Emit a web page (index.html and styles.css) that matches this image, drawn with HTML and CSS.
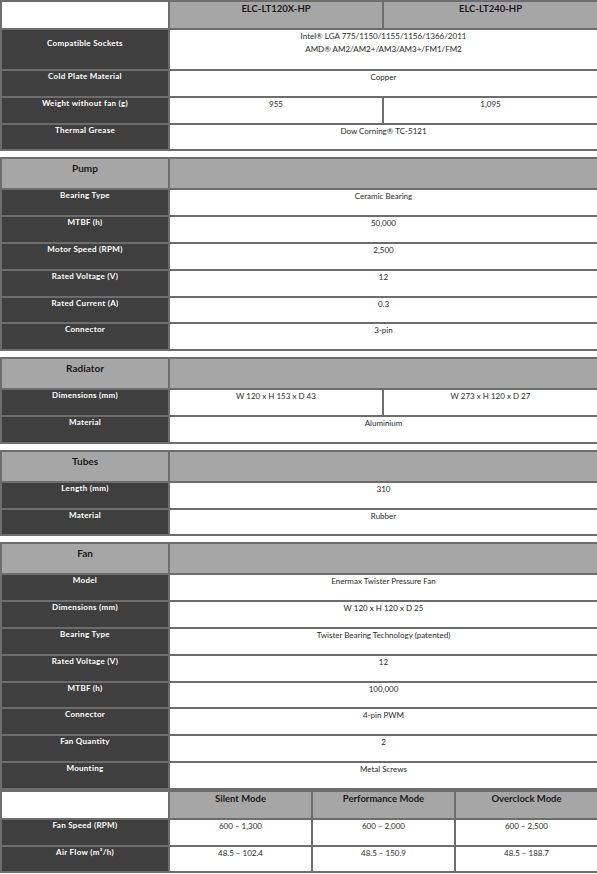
FILE: index.html
```html
<!DOCTYPE html>
<html>
<head>
<meta charset="utf-8">
<link rel="stylesheet" href="styles.css">
</head>
<body>
<div class="page">
  <table class="spec">
    <colgroup><col class="c1"><col class="c2"><col class="c3"></colgroup>
    <tr class="hrow"><td class="blank"></td><th class="model">ELC-LT120X-HP</th><th class="model">ELC-LT240-HP</th></tr>
    <tr class="tall"><td class="lab lab-tall">Compatible Sockets</td><td class="val" colspan="2">Intel® LGA 775/1150/1155/1156/1366/2011<br>AMD® AM2/AM2+/AM3/AM3+/FM1/FM2</td></tr>
    <tr class="row"><td class="lab">Cold Plate Material</td><td class="val" colspan="2">Copper</td></tr>
    <tr class="row"><td class="lab">Weight without fan (g)</td><td class="val">955</td><td class="val">1,095</td></tr>
    <tr class="row"><td class="lab">Thermal Grease</td><td class="val" colspan="2">Dow Corning® TC-5121</td></tr>
  </table>

  <table class="spec">
    <colgroup><col class="c1"><col class="c2"><col class="c3"></colgroup>
    <tr class="srow"><th class="sec">Pump</th><th class="gray" colspan="2"></th></tr>
    <tr class="row"><td class="lab">Bearing Type</td><td class="val" colspan="2">Ceramic Bearing</td></tr>
    <tr class="row"><td class="lab">MTBF (h)</td><td class="val" colspan="2">50,000</td></tr>
    <tr class="row"><td class="lab">Motor Speed (RPM)</td><td class="val" colspan="2">2,500</td></tr>
    <tr class="row"><td class="lab">Rated Voltage (V)</td><td class="val" colspan="2">12</td></tr>
    <tr class="row"><td class="lab">Rated Current (A)</td><td class="val" colspan="2">0.3</td></tr>
    <tr class="row"><td class="lab">Connector</td><td class="val" colspan="2">3-pin</td></tr>
  </table>

  <table class="spec">
    <colgroup><col class="c1"><col class="c2"><col class="c3"></colgroup>
    <tr class="srow"><th class="sec">Radiator</th><th class="gray" colspan="2"></th></tr>
    <tr class="row"><td class="lab">Dimensions (mm)</td><td class="val">W 120 x H 153 x D 43</td><td class="val">W 273 x H 120 x D 27</td></tr>
    <tr class="row"><td class="lab">Material</td><td class="val" colspan="2">Aluminium</td></tr>
  </table>

  <table class="spec">
    <colgroup><col class="c1"><col class="c2"><col class="c3"></colgroup>
    <tr class="srow"><th class="sec">Tubes</th><th class="gray" colspan="2"></th></tr>
    <tr class="row"><td class="lab">Length (mm)</td><td class="val" colspan="2">310</td></tr>
    <tr class="row"><td class="lab">Material</td><td class="val" colspan="2">Rubber</td></tr>
  </table>

  <table class="spec">
    <colgroup><col class="c1"><col class="c2"><col class="c3"></colgroup>
    <tr class="srow"><th class="sec">Fan</th><th class="gray" colspan="2"></th></tr>
    <tr class="row"><td class="lab">Model</td><td class="val" colspan="2">Enermax Twister Pressure Fan</td></tr>
    <tr class="row"><td class="lab">Dimensions (mm)</td><td class="val" colspan="2">W 120 x H 120 x D 25</td></tr>
    <tr class="row"><td class="lab">Bearing Type</td><td class="val" colspan="2">Twister Bearing Technology (patented)</td></tr>
    <tr class="row"><td class="lab">Rated Voltage (V)</td><td class="val" colspan="2">12</td></tr>
    <tr class="row"><td class="lab">MTBF (h)</td><td class="val" colspan="2">100,000</td></tr>
    <tr class="row"><td class="lab">Connector</td><td class="val" colspan="2">4-pin PWM</td></tr>
    <tr class="row"><td class="lab">Fan Quantity</td><td class="val" colspan="2">2</td></tr>
    <tr class="row"><td class="lab">Mounting</td><td class="val" colspan="2">Metal Screws</td></tr>
  </table>

  <table class="spec modes">
    <colgroup><col class="c1"><col class="m"><col class="m"><col class="m"></colgroup>
    <tr class="hrow"><td class="blank"></td><th class="model">Silent Mode</th><th class="model">Performance Mode</th><th class="model">Overclock Mode</th></tr>
    <tr class="row"><td class="lab">Fan Speed (RPM)</td><td class="val">600 – 1,300</td><td class="val">600 – 2,000</td><td class="val">600 – 2,500</td></tr>
    <tr class="row"><td class="lab">Air Flow (m³/h)</td><td class="val">48.5 – 102.4</td><td class="val">48.5 – 150.9</td><td class="val">48.5 – 188.7</td></tr>
  </table>
</div>
</body>
</html>
```

FILE: styles.css
```css
html, body {
  margin: 0;
  padding: 0;
  background: #ffffff;
}

.page {
  width: 597px;
  display: flex;
  flex-direction: column;
  gap: 6px;
  font-family: Lato, "Open Sans", sans-serif;
}

.spec {
  width: 597px;
  table-layout: fixed;
  border-collapse: collapse;
  border: 2px solid #6d6d6d;
}

.modes {
  margin-top: -6px;
}

.c1 { width: 168px; }
.c2 { width: 214px; }
.c3 { width: 215px; }
.m { width: 143px; }

.spec td, .spec th {
  border: 2px solid #6d6d6d;
  padding: 0;
  vertical-align: top;
  text-align: center;
}

.hrow { height: 28px; }
.srow { height: 31px; }
.row { height: 26.8px; }
.tall { height: 41px; }

.blank { background: #ffffff; }

.model {
  background: #a6a6a6;
  color: #1a1a1a;
  font-size: 9.5px;
  font-weight: 700;
  line-height: 12px;
  padding-top: 1px !important;
}

.sec {
  background: #a6a6a6;
  color: #1a1a1a;
  font-size: 10px;
  font-weight: 700;
  line-height: 12px;
  padding-top: 3px !important;
}

.gray { background: #a6a6a6; }

.lab {
  background: #3f3f3f;
  color: #ffffff;
  font-size: 8px;
  font-weight: 700;
  line-height: 10px;
  letter-spacing: 0.3px;
  padding-top: 0 !important;
}

.lab-tall { padding-top: 8px !important; }

.val {
  background: #ffffff;
  color: #2a2a2a;
  font-size: 8px;
  line-height: 13px;
  padding-top: 0 !important;
}
```
